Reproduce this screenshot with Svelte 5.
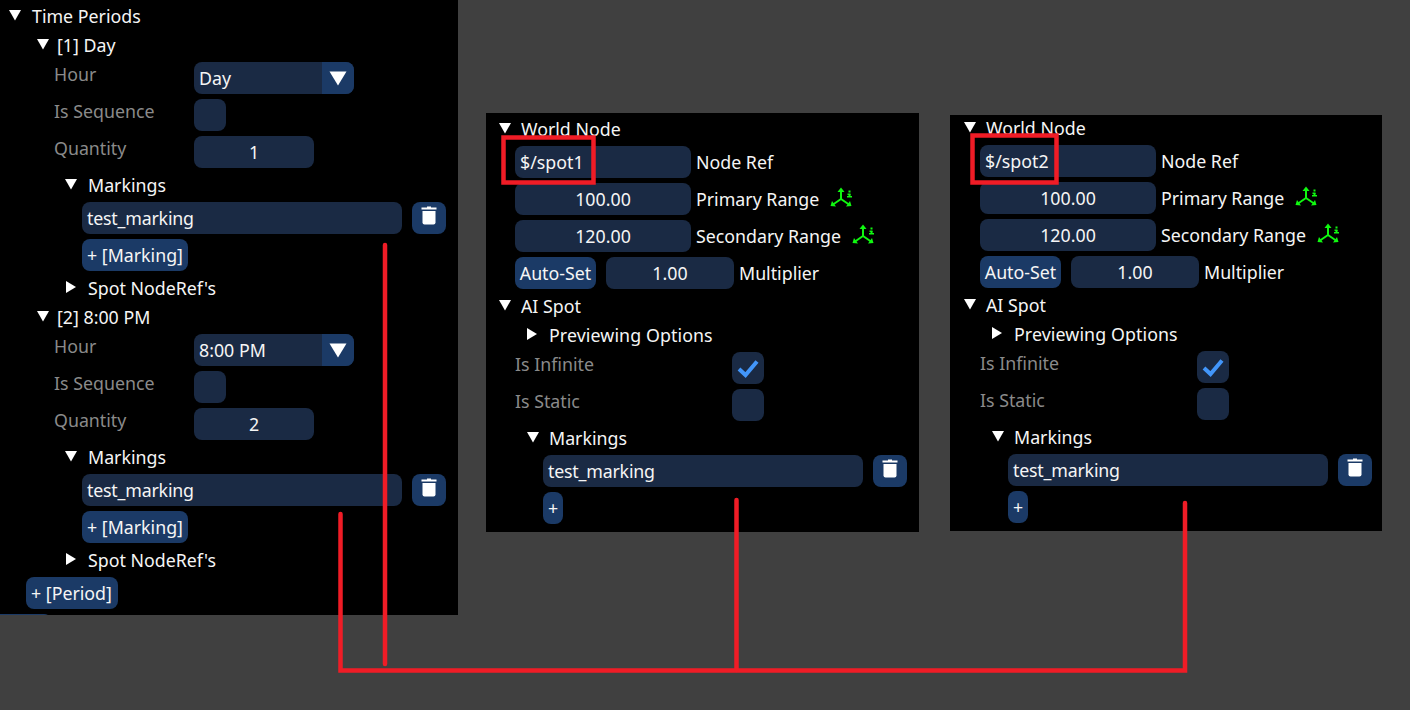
<script>
  const periods = [
    { id: 1, title: '[1] Day', hour: 'Day', qty: '1' },
    { id: 2, title: '[2] 8:00 PM', hour: '8:00 PM', qty: '2' }
  ];
  const nodes = [
    { cls: 'spot1', ref: '$/spot1' },
    { cls: 'spot2', ref: '$/spot2' }
  ];
</script>

{#snippet arrow(open)}
  <svg class="arrow" class:closed={!open} width="14" height="14" viewBox="0 0 14 14" aria-hidden="true">
    {#if open}
      <polygon points="1,2 13,2 7,12.5" fill="#fff" />
    {:else}
      <polygon points="2,1 12,7 2,13" fill="#fff" />
    {/if}
  </svg>
{/snippet}

{#snippet tree(label, open, cls)}
  <div class="tree {cls}">
    {@render arrow(open)}
    <span>{label}</span>
  </div>
{/snippet}

{#snippet trash()}
  <button class="btn trash" aria-label="Delete">
    <svg width="16" height="20" viewBox="0 0 16 20" aria-hidden="true">
      <rect x="6" y="0.5" width="4" height="2" fill="#fff" />
      <rect x="0.5" y="1.5" width="15" height="2" fill="#fff" />
      <path d="M1.5 5H14.5V16.5A2 2 0 0 1 12.5 18.5H3.5A2 2 0 0 1 1.5 16.5Z" fill="#fff" />
    </svg>
  </button>
{/snippet}

{#snippet gizmo()}
  <svg class="gizmo" width="24" height="24" viewBox="0 0 24 24" aria-hidden="true">
    <g stroke="#10f810" stroke-width="2" fill="none">
      <path d="M11 12V3" />
      <path d="M11 12L3 17.5" />
      <path d="M11 12L19 17.5" />
    </g>
    <g fill="#10f810">
      <polygon points="11,0.5 7.5,5 14.5,5" />
      <polygon points="0.5,19 2,14 6,19.5" />
      <polygon points="21.5,19 20,14 16,19.5" />
    </g>
    <rect x="18.5" y="3.5" width="2" height="2" fill="#10f810" />
    <rect x="17.5" y="6.5" width="3" height="1.5" fill="#10f810" />
    <rect x="18.5" y="7" width="2" height="3" fill="#10f810" />
    <rect x="17" y="9" width="5" height="1.5" fill="#10f810" />
  </svg>
{/snippet}

{#snippet markingRow(width)}
  <div class="row marking">
    <div class="frame text" style="width:{width}px"><span class="tight">test_marking</span></div>
    {@render trash()}
  </div>
{/snippet}

<main class="desktop">
  <section class="panel time">
    {@render tree('Time Periods', true, 'lvl0')}
    {#each periods as p}
      {@render tree(p.title, true, 'lvl1')}
      <div class="row field">
        <span class="dim">Hour</span>
        <div class="frame combo"><span>{p.hour}</span>
          <i class="combo-btn">
            <svg width="18" height="15" viewBox="0 0 18 15" aria-hidden="true"><polygon points="0.5,0.5 17.5,0.5 9,14.5" fill="#fff" /></svg>
          </i>
        </div>
      </div>
      <div class="row field">
        <span class="dim">Is Sequence</span>
        <div class="frame check"></div>
      </div>
      <div class="row field">
        <span class="dim">Quantity</span>
        <div class="frame num qty">{p.qty}</div>
      </div>
      {@render tree('Markings', true, 'lvl2')}
      <div class="inset82">{@render markingRow(320)}</div>
      <button class="btn add inset82">+ [Marking]</button>
      {@render tree("Spot NodeRef's", false, 'lvl2')}
    {/each}
    <button class="btn add period">+ [Period]</button>
    <div class="sliver"></div>
  </section>

  {#each nodes as n}
    <section class="panel node {n.cls}">
      {@render tree('World Node', true, 'n0')}
      <div class="row n-row">
        <div class="frame text wide">{n.ref}</div>
        <span class="side">Node Ref</span>
      </div>
      <div class="row n-row">
        <div class="frame num wide">100.00</div>
        <span class="side">Primary Range</span>
        {@render gizmo()}
      </div>
      <div class="row n-row">
        <div class="frame num wide">120.00</div>
        <span class="side">Secondary Range</span>
        {@render gizmo()}
      </div>
      <div class="row n-row">
        <button class="btn auto">Auto-Set</button>
        <div class="frame num mult">1.00</div>
        <span class="side">Multiplier</span>
      </div>
      {@render tree('AI Spot', true, 'n0')}
      {@render tree('Previewing Options', false, 'n1 wider')}
      <div class="row n-row">
        <span class="dim wide-label">Is Infinite</span>
        <div class="frame check">
          <svg width="32" height="32" viewBox="0 0 32 32" aria-hidden="true">
            <path d="M7 17L13.5 23L25 9.5" fill="none" stroke="#4296fa" stroke-width="4" />
          </svg>
        </div>
      </div>
      <div class="row n-row">
        <span class="dim wide-label">Is Static</span>
        <div class="frame check"></div>
      </div>
      {@render tree('Markings', true, 'n1')}
      <div class="inset-n">{@render markingRow(320)}</div>
      <button class="btn plus inset-n">+</button>
    </section>
  {/each}

  <svg class="notes" width="1410" height="710" aria-hidden="true">
    <g fill="none" stroke="#f01c26" stroke-width="4.5">
      <rect x="503.5" y="137.5" width="90" height="45" />
      <rect x="972.5" y="135.5" width="84" height="47" />
    </g>
    <g stroke="#f01c26" stroke-width="4.5" stroke-linecap="round" fill="none">
      <path d="M385 245V664" />
      <path d="M340.5 514V670.5H1185V503" />
      <path d="M736.5 500V670" />
    </g>
  </svg>
</main>

<style>
  :global(body) {
    margin: 0;
    background: #404040;
  }
  .desktop {
    position: relative;
    width: 1410px;
    height: 710px;
    overflow: hidden;
    background: #404040;
    font-family: "Noto Sans", sans-serif;
    font-size: 17.8px;
    color: #f5f5f5;
  }
  .panel {
    position: absolute;
    box-sizing: border-box;
    background: #000;
    display: flex;
    flex-direction: column;
    gap: 5px;
    overflow: hidden;
  }
  .time {
    left: 0;
    top: 0;
    width: 458px;
    height: 615px;
    padding-top: 4px;
  }
  .node.spot1 {
    left: 486px;
    top: 113px;
    width: 433px;
    height: 419px;
    padding: 4px 0 0 13px;
  }
  .node.spot2 {
    left: 950px;
    top: 115px;
    width: 432px;
    height: 416px;
    padding: 1px 0 0 14px;
  }
  .tree {
    height: 24px;
    display: flex;
    align-items: center;
    line-height: 24px;
    flex: none;
  }
  .arrow {
    width: 14px;
    flex: none;
    margin-right: 8px;
    position: relative;
    top: -1px;
  }
  .node .arrow {
    left: -1px;
  }
  .node .arrow.closed {
    left: -2px;
  }
  .wider span {
    letter-spacing: 0.1px;
  }
  .lvl0 { margin-left: 8px; }
  .lvl0 .arrow { margin-right: 10px; }
  .lvl1 { margin-left: 36px; }
  .lvl1 .arrow { margin-right: 7px; }
  .lvl2 { margin-left: 64px; }
  .lvl2 .arrow { margin-right: 10px; }
  .n0 { margin-left: 0; }
  .n1 { margin-left: 28px; }
  .row {
    display: flex;
    flex: none;
    height: 32px;
  }
  .n-row {
    margin-left: 16px;
  }
  .field {
    margin-left: 54px;
  }
  .dim {
    color: #8a8a8a;
    line-height: 24px;
    flex: none;
  }
  .field .dim {
    width: 140px;
  }
  .frame {
    box-sizing: border-box;
    height: 32px;
    line-height: 32px;
    background: #1a2a44;
    border-radius: 8px;
    flex: none;
  }
  .text {
    padding-left: 5px;
  }
  .tight {
    letter-spacing: -0.2px;
  }
  .num {
    text-align: center;
  }
  .qty {
    width: 120px;
  }
  .check {
    width: 32px;
  }
  .check svg {
    display: block;
  }
  .combo {
    width: 160px;
    padding-left: 5px;
    position: relative;
    overflow: hidden;
  }
  .combo-btn {
    position: absolute;
    top: 0;
    right: 0;
    width: 32px;
    height: 32px;
    background: #1b3a66;
    display: flex;
    align-items: flex-start;
    justify-content: center;
    padding-top: 9px;
    box-sizing: border-box;
  }
  .btn {
    box-sizing: border-box;
    height: 32px;
    border: 0;
    margin: 0;
    padding: 0 5px;
    font: inherit;
    line-height: 32px;
    color: inherit;
    background: #1b3a66;
    border-radius: 8px;
    flex: none;
    white-space: nowrap;
  }
  .add {
    align-self: flex-start;
    text-align: left;
  }
  .inset82 {
    margin-left: 82px;
  }
  .period {
    margin-left: 26px;
    width: 92px;
  }
  .sliver {
    width: 52px;
    height: 32px;
    flex: none;
    background: #1b3a66;
    border-radius: 0 8px 0 0;
  }
  .marking {
    gap: 10px;
  }
  .trash {
    width: 34px;
    padding: 4px 0 0;
    display: flex;
    justify-content: center;
    align-items: flex-start;
  }
  .wide {
    width: 176px;
  }
  .side {
    margin-left: 5px;
    line-height: 32px;
  }
  .gizmo {
    margin-left: 11px;
    margin-top: 4px;
    flex: none;
  }
  .auto {
    width: 81px;
    padding: 0;
    text-align: center;
  }
  .mult {
    width: 128px;
    margin-left: 10px;
  }
  .wide-label {
    width: 217px;
  }
  .inset-n {
    margin-left: 44px;
  }
  .plus {
    width: 20px;
    padding: 0;
    text-align: center;
    align-self: flex-start;
  }
  .notes {
    position: absolute;
    left: 0;
    top: 0;
    pointer-events: none;
  }
</style>
